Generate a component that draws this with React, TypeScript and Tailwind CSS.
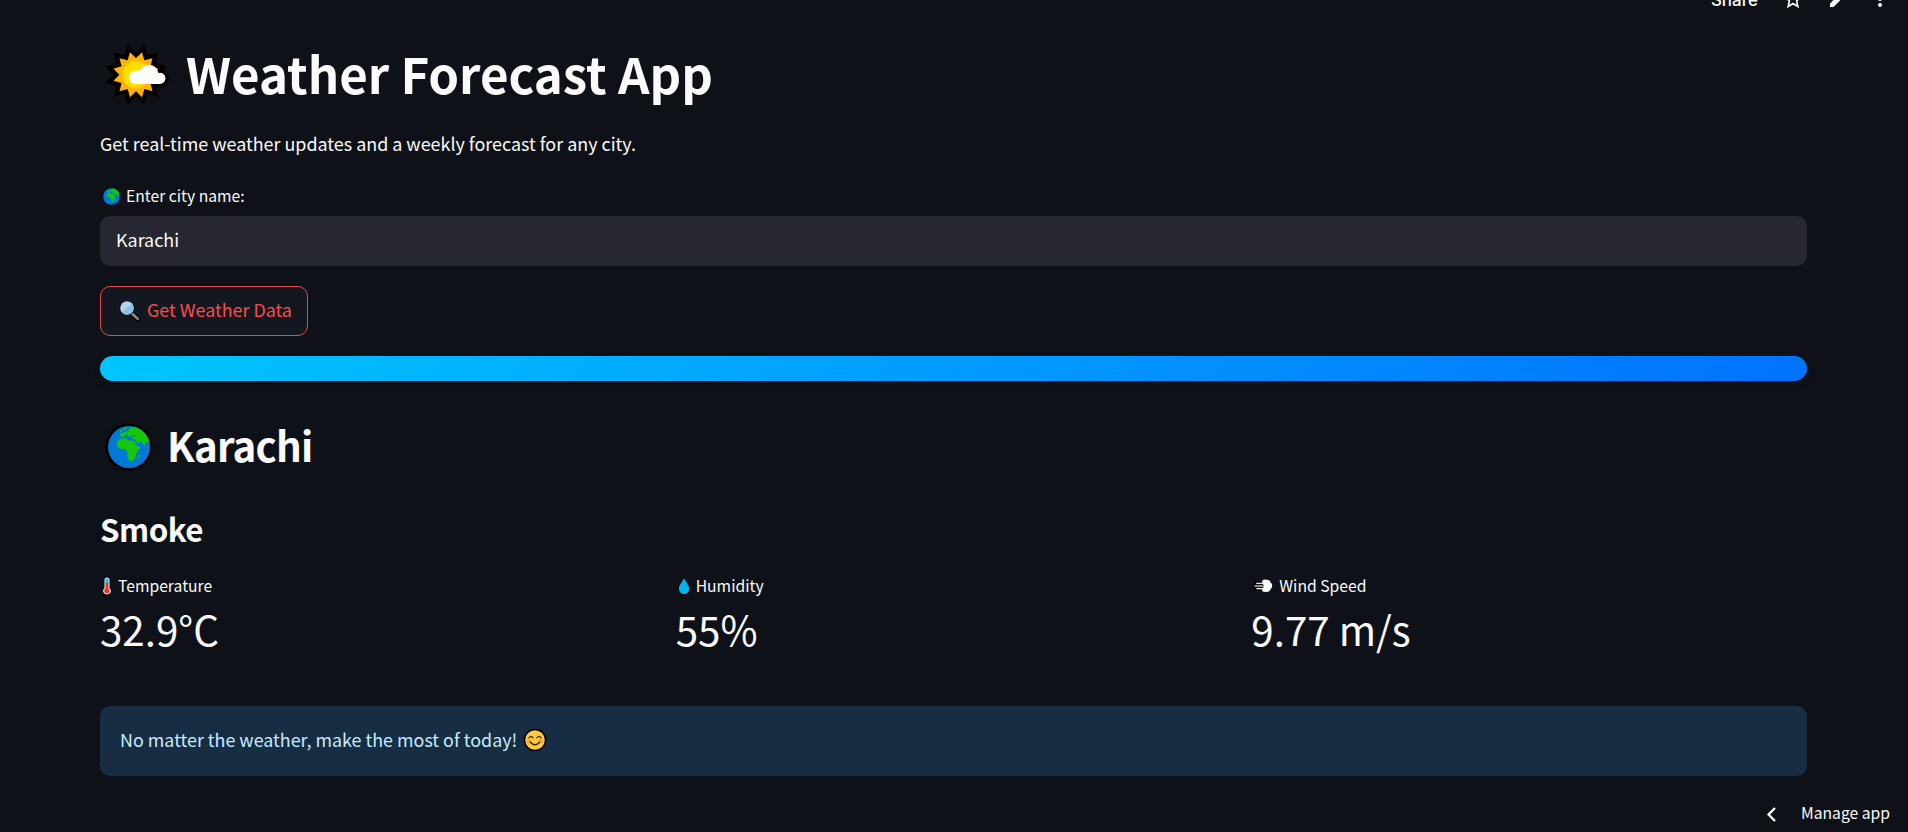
import React from "react";

const rays = (cx: number, cy: number, outer: number, inner: number, n: number) =>
  Array.from({ length: n * 2 }, (_, i) => {
    const r = i % 2 === 0 ? outer : inner;
    const a = (Math.PI * (i + 1)) / n - Math.PI / 2 - (Math.PI / n) * 0.5;
    return `${(cx + r * Math.cos(a)).toFixed(2)},${(cy + r * Math.sin(a)).toFixed(2)}`;
  }).join(" ");

function SunCloud({ className }: { className: string }) {
  const pts = rays(108, 119, 70, 50, 12);
  const cloud =
    "M109 147 A20 20 0 0 1 106 107 Q112 105 122 106 A28 28 0 0 1 174 110 Q175 113 174 114 A17 17 0 1 1 178 147 Z";
  return (
    <svg className={className} viewBox="0 0 240 240" fill="none">
      <polygon points={pts} fill="#000" stroke="#000" strokeWidth="25" strokeLinejoin="miter" transform="rotate(7.5 108 119)" />
      <path d={cloud} fill="#000" stroke="#000" strokeWidth="20" />
      <polygon points={pts} fill="#ffb10a" transform="rotate(7.5 108 119)" />
      <circle cx="108" cy="119" r="44" fill="#ffc107" />
      <circle cx="107" cy="119" r="38" fill="#ffde00" />
      <path d={cloud} fill="#fff" />
    </svg>
  );
}

function Globe({ className, ring }: { className: string; ring: number }) {
  return (
    <svg className={className} viewBox="0 0 48 48">
      <circle cx="24" cy="24" r={21 + ring} fill="#000" />
      <circle cx="24" cy="24" r="21" fill="#0078d7" />
      <g fill="#16c60c">
        <path d="M12.2 18.5 C13.5 16.8 15.5 15.8 19.5 15.3 L21.5 15.2 L22.5 17.2 L26 17.6 L29.5 18 L31 21.5 L33.3 24 L35.6 24 C35 26.5 31 29.5 30.8 32 C30.6 35.5 28.2 38.5 25.6 38.2 C23 37.8 22.4 32 22.2 28.8 C21.6 26.5 19.5 26 16.8 26 C13.8 26 11.5 23.5 11.6 21.5 Z" />
        <path d="M15.5 13.5 L14.8 11 L17 9.8 L20 9.6 L23 7.5 L25.5 4.3 L29.5 3.7 L36 6.8 C40.5 10 44 15 44.6 20.5 L43 18.8 L40.8 19.8 L39.2 23.4 L37 19.6 L34.8 18.8 L34 21.5 L31.8 19 L30.4 16.6 L27.6 15.8 L26 13 L23.4 13.6 L21.8 11.8 L18.8 13.6 L17 14.8 Z" />
        <path d="M18.5 5 L22.5 3.5 L21.5 5.8 L18.8 7.2 Z M34.3 31.2 L35 33.5 L33 35 L32.6 33.3 Z M14.8 7.8 L17 6.5 L17 8.8 L15.4 9.5 Z" />
      </g>
      <path d="M20.8 12 L24 14.8 M27.3 12.7 L31 12.8 M24 8.2 L22 9.4" stroke="#0078d7" strokeWidth="1" />
    </svg>
  );
}

function Magnifier() {
  return (
    <svg className="ml-[2px] mt-[3px] h-[22px] w-[22px] shrink-0" viewBox="0 0 22 22">
      <path d="M12 13 L19.2 19.6" stroke="#000" strokeWidth="4.4" strokeLinecap="round" />
      <path d="M12.5 13 L18.8 18.9" stroke="#8d8d8d" strokeWidth="2.6" strokeLinecap="round" />
      <circle cx="8" cy="8" r="7.6" fill="#111" />
      <circle cx="8" cy="8" r="6.8" fill="#b3d3ee" />
      <path d="M3.2 12.8 L12.8 3.2 A6.8 6.8 0 0 1 3.2 12.8" fill="#8fc0ea" />
    </svg>
  );
}

function Thermometer() {
  return (
    <svg className="ml-[3px] h-[18px] w-2 shrink-0" viewBox="0 0 8 20" preserveAspectRatio="none">
      <path d="M1.5 3 A2.5 2.5 0 0 1 6.5 3 V12.5 A3.9 3.9 0 1 1 1.5 12.5 Z" fill="#e8f1f5" />
      <path d="M2.3 3 A1.7 1.7 0 0 1 5.7 3 V7 H2.3 Z" fill="#3fb4dd" />
      <path d="M2.5 6.5 H5.5 V13 A2.8 2.8 0 1 1 2.5 13 Z" fill="#e3382b" />
    </svg>
  );
}

function Drop() {
  return (
    <svg className="ml-[2px] h-[18px] w-3 shrink-0" viewBox="0 0 12 18">
      <path
        d="M6 1 C7.2 4.2 11.2 8.2 11.2 11.8 A5.2 5.2 0 0 1 0.8 11.8 C0.8 8.2 4.8 4.2 6 1Z"
        fill="#00b4f1"
        stroke="#000"
        strokeWidth="1.2"
        paintOrder="stroke"
      />
    </svg>
  );
}

function Wind() {
  return (
    <svg className="ml-[2px] h-4 w-5 shrink-0" viewBox="0 0 20 16">
      <path d="M3 5 H11 M1.5 8.2 H11 M3 11 H11" stroke="#000" strokeWidth="3.6" strokeLinecap="round" />
      <path
        d="M9 4 C9 1.8 12 1 13.2 2 C15.4 1.4 17.6 3 17.4 4.4 C19.6 5.4 19.8 9.4 17.8 10.6 C17.6 13.4 14.4 14.6 12.6 13.8 C10.6 14.4 8.8 13.2 9 11.4 L11 8 Z"
        fill="#fff"
      />
      <path d="M3.2 5.4 H10.6" stroke="#ddd" strokeWidth="1.4" />
      <path d="M1.4 8 H11" stroke="#bbb" strokeWidth="1.5" />
      <path d="M3.4 10.6 H10.8" stroke="#eee" strokeWidth="1.4" />
    </svg>
  );
}

function Smile() {
  return (
    <svg className="ml-[6px] mt-[2px] h-6 w-6 shrink-0" viewBox="0 0 24 24" fill="none">
      <circle cx="12" cy="12" r="11.2" fill="#000" />
      <circle cx="12" cy="12" r="9.8" fill="#ffc83d" />
      <circle cx="6.3" cy="13.4" r="2.2" fill="#ff9a4a" />
      <circle cx="17.7" cy="13.4" r="2.2" fill="#ff9a4a" />
      <path
        d="M6 9.8 Q8 7 10 9.8 M14 9.8 Q16 7 18 9.8 M7.4 14.2 Q12 19.4 16.6 14.2"
        stroke="#3d2b10"
        strokeWidth="1.4"
        strokeLinecap="round"
      />
    </svg>
  );
}

function Metric({ icon, label, value, gap }: { icon: React.ReactNode; label: string; value: string; gap: string }) {
  return (
    <div className="flex-1">
      <div className="flex h-5 items-center whitespace-nowrap text-[15.7px]">
        {icon}
        <span className={gap}>{label}</span>
      </div>
      <div className="mt-1.5 flex h-[54px] items-center whitespace-nowrap text-[40.3px]">{value}</div>
    </div>
  );
}

export default function App() {
  return (
    <div className="relative h-[832px] w-full overflow-hidden bg-[#0e1117] font-['Noto_Sans_CJK_SC','Noto_Sans',sans-serif] text-[#fafafa]">
      <header className="absolute right-0 top-0 flex h-4 items-start">
        <span className="-mt-[12px] font-['Inter',sans-serif] text-[17px] font-medium leading-[24px]">Share</span>
        <svg className="-mt-[11px] ml-[25px] h-5 w-5" viewBox="0 0 24 24" fill="none" stroke="currentColor" strokeWidth="2">
          <path d="M12 3 L14.7 9.2 L21.4 9.8 L16.3 14.3 L17.8 21 L12 17.4 L6.2 21 L7.7 14.3 L2.6 9.8 L9.3 9.2 Z" />
        </svg>
        <svg className="-mt-[13px] ml-[25px] h-5 w-5" viewBox="0 0 20 20" fill="currentColor">
          <path d="M2 20 V16.5 L13 5.5 L16.5 9 L5.5 20 Z" />
        </svg>
        <svg className="-mt-[13px] ml-[22px] mr-[18px] h-5 w-5" viewBox="0 0 20 20" fill="currentColor">
          <circle cx="10" cy="12" r="2" />
          <circle cx="10" cy="18" r="2" />
        </svg>
      </header>

      <main className="ml-[100px] flex w-[1707px] flex-col">
        <h1 className="mt-[43px] flex h-[60px] items-center whitespace-nowrap text-[49.2px] font-bold">
          <SunCloud className="mt-1 h-20 w-20 shrink-0" />
          <span className="ml-[6px]">Weather Forecast App</span>
        </h1>
        <p className="mt-7 flex h-6 items-center text-[17.92px]">
          Get real-time weather updates and a weekly forecast for any city.
        </p>

        <label className="mt-[31px] flex h-5 items-center text-[15.7px]">
          <Globe className="ml-[2px] h-[19px] w-[19px] shrink-0" ring={0} />
          <span className="ml-[5px]">Enter city name:</span>
        </label>
        <div className="mt-[10px] flex h-[50px] items-center rounded-[10px] bg-[#262730] px-4 pb-1 text-[17.9px]">
          Karachi
        </div>

        <button className="mt-5 flex h-[50px] w-[208px] items-center whitespace-nowrap rounded-[10px] border border-[#e9484b] bg-[#131720] px-4 pb-1 text-[17.9px] text-[#ff4b4b]">
          <Magnifier />
          <span className="ml-[6px]">Get Weather Data</span>
        </button>

        <div className="mt-5 h-[25px] rounded-full bg-[linear-gradient(135deg,#00c6ff,#0072ff)] shadow-[0_4px_10px_rgba(0,0,0,0.1)]" />

        <h2 className="mt-[37px] flex h-[54px] items-center text-[40.3px] font-semibold tracking-[-0.75px]">
          <Globe className="ml-[5px] mt-[3px] h-12 w-12 shrink-0" ring={2.6} />
          <span className="ml-[14px]">Karachi</span>
        </h2>
        <h3 className="mt-9 flex h-[42px] items-center text-[31.3px] font-semibold tracking-[-0.5px]">Smoke</h3>

        <section className="mt-[26px] flex gap-5">
          <Metric icon={<Thermometer />} label="Temperature" value="32.9°C" gap="ml-[7px]" />
          <Metric icon={<Drop />} label="Humidity" value="55%" gap="ml-[6px]" />
          <Metric icon={<Wind />} label="Wind Speed" value="9.77 m/s" gap="ml-[6px]" />
        </section>

        <div className="mt-[50px] flex h-[70px] items-center rounded-[10px] bg-[#172d43] px-5 pb-1 text-[17.9px] text-[#c7ebff]">
          <span>No matter the weather, make the most of today!</span>
          <Smile />
        </div>
      </main>

      <footer className="absolute bottom-0 right-0 flex h-[38px] items-center pr-[18px] text-[15.7px]">
        <svg className="mr-[24px] mt-[2px] h-[15px] w-[11px]" viewBox="0 0 11 15" fill="none" stroke="currentColor" strokeWidth="2.4">
          <path d="M9 1 L2.6 7.5 L9 14" />
        </svg>
        <span>Manage app</span>
      </footer>
    </div>
  );
}
